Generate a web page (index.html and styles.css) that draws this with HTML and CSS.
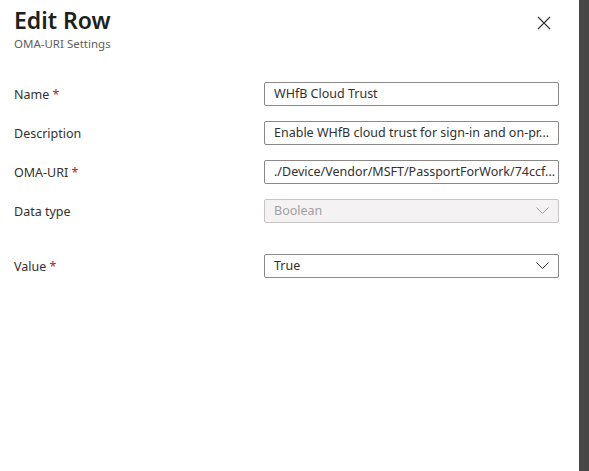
FILE: index.html
```html
<!DOCTYPE html>
<html>
<head>
<meta charset="utf-8">
<link rel="stylesheet" href="styles.css">
</head>
<body>
<div class="page">
  <div class="panel">
    <div class="header">
      <div class="titles">
        <div class="title">Edit Row</div>
        <div class="subtitle">OMA-URI Settings</div>
      </div>
      <div class="close" aria-label="Close">
        <svg width="14" height="14" viewBox="0 0 14 14"><path d="M1 1 L13 13 M13 1 L1 13" stroke="#323130" stroke-width="1.1" fill="none"/></svg>
      </div>
    </div>
    <div class="form">
      <div class="row">
        <div class="label">Name <span class="req">*</span></div>
        <div class="field">WHfB Cloud Trust</div>
      </div>
      <div class="row">
        <div class="label">Description</div>
        <div class="field">Enable WHfB cloud trust for sign-in and on-pr...</div>
      </div>
      <div class="row">
        <div class="label">OMA-URI <span class="req">*</span></div>
        <div class="field">./Device/Vendor/MSFT/PassportForWork/74ccf...</div>
      </div>
      <div class="row">
        <div class="label">Data type</div>
        <div class="field select disabled"><span>Boolean</span>
          <svg class="chev" width="13" height="8" viewBox="0 0 13 8"><path d="M0.5 0.5 L6.5 6.5 L12.5 0.5" stroke="#a19f9d" stroke-width="1" fill="none"/></svg>
        </div>
      </div>
      <div class="row gap-top">
        <div class="label">Value <span class="req">*</span></div>
        <div class="field select"><span>True</span>
          <svg class="chev" width="13" height="8" viewBox="0 0 13 8"><path d="M0.5 0.5 L6.5 6.5 L12.5 0.5" stroke="#323130" stroke-width="1" fill="none"/></svg>
        </div>
      </div>
    </div>
  </div>
  <div class="scrollbar"></div>
</div>
</body>
</html>
```

FILE: styles.css
```css
html, body {
  margin: 0;
  padding: 0;
  background: #ffffff;
}
body {
  font-family: "Noto Sans", "Open Sans", sans-serif;
  color: #323130;
}
.page {
  display: flex;
  width: 589px;
  height: 471px;
}
.panel {
  width: 579px;
  box-sizing: border-box;
  padding: 4px 0 0 14px;
}
.scrollbar {
  width: 10px;
  height: 471px;
  background: #464646;
}
.header {
  display: flex;
  justify-content: space-between;
  align-items: flex-start;
  width: 537px;
}
.title {
  font-size: 23px;
  font-weight: 600;
  line-height: 32px;
  color: #201f1e;
}
.subtitle {
  font-size: 11.5px;
  line-height: 16px;
  color: #605e5c;
}
.close {
  margin-top: 12px;
  width: 14px;
  height: 14px;
}
.close svg { display: block; }
.form {
  margin-top: 30px;
  display: flex;
  flex-direction: column;
  gap: 15px;
}
.row {
  display: grid;
  grid-template-columns: 250px 295px;
  align-items: center;
  height: 24px;
}
.row.gap-top {
  margin-top: 16px;
}
.label {
  font-size: 12.5px;
  color: #323130;
}
.req {
  color: #a4262c;
}
.field {
  box-sizing: border-box;
  height: 24px;
  border: 1px solid #8a8886;
  border-radius: 2px;
  padding: 0 8px 0 9px;
  font-size: 12.5px;
  line-height: 22px;
  color: #323130;
  white-space: nowrap;
  overflow: hidden;
}
.select {
  display: flex;
  justify-content: space-between;
  align-items: center;
  padding-right: 9px;
}
.disabled {
  background: #f5f2f4;
  border-color: #c8c6c4;
  color: #a19f9d;
}
.chev {
  display: block;
}
```
